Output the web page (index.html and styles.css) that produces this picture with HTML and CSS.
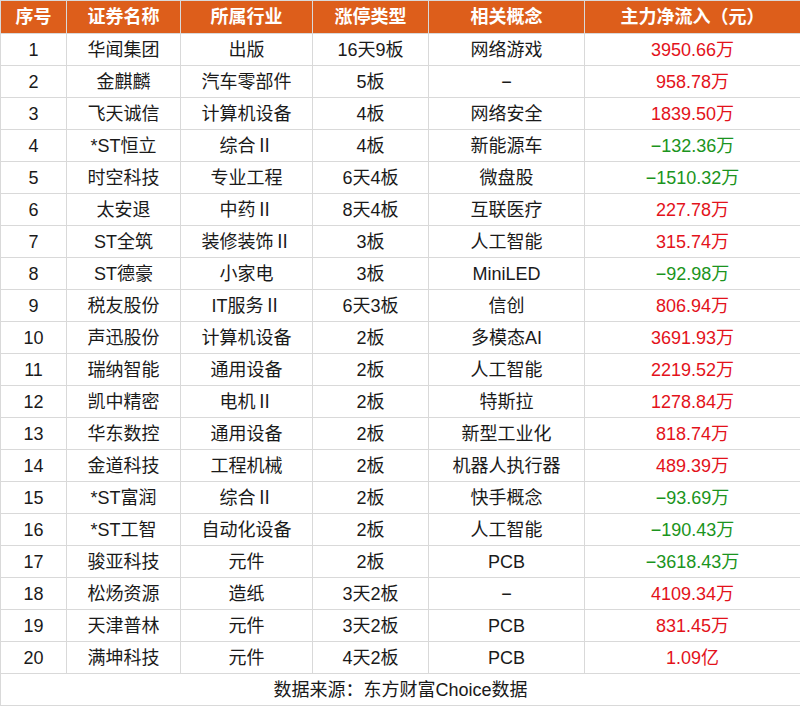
FILE: index.html
```html
<!DOCTYPE html>
<html lang="zh-CN">
<head>
<meta charset="utf-8">
<link rel="stylesheet" href="styles.css">
</head>
<body>
<table class="tbl">
<colgroup>
<col class="c1"><col class="c2"><col class="c3"><col class="c4"><col class="c5"><col class="c6">
</colgroup>
<thead>
<tr><th>序号</th><th>证券名称</th><th>所属行业</th><th>涨停类型</th><th>相关概念</th><th>主力净流入（元）</th></tr>
</thead>
<tbody>
<tr><td>1</td><td>华闻集团</td><td>出版</td><td>16天9板</td><td>网络游戏</td><td class="up">3950.66万</td></tr>
<tr><td>2</td><td>金麒麟</td><td>汽车零部件</td><td>5板</td><td>−</td><td class="up">958.78万</td></tr>
<tr><td>3</td><td>飞天诚信</td><td>计算机设备</td><td>4板</td><td>网络安全</td><td class="up">1839.50万</td></tr>
<tr><td>4</td><td>*ST恒立</td><td>综合Ⅱ</td><td>4板</td><td>新能源车</td><td class="down">−132.36万</td></tr>
<tr><td>5</td><td>时空科技</td><td>专业工程</td><td>6天4板</td><td>微盘股</td><td class="down">−1510.32万</td></tr>
<tr><td>6</td><td>太安退</td><td>中药Ⅱ</td><td>8天4板</td><td>互联医疗</td><td class="up">227.78万</td></tr>
<tr><td>7</td><td>ST全筑</td><td>装修装饰Ⅱ</td><td>3板</td><td>人工智能</td><td class="up">315.74万</td></tr>
<tr><td>8</td><td>ST德豪</td><td>小家电</td><td>3板</td><td>MiniLED</td><td class="down">−92.98万</td></tr>
<tr><td>9</td><td>税友股份</td><td>IT服务Ⅱ</td><td>6天3板</td><td>信创</td><td class="up">806.94万</td></tr>
<tr><td>10</td><td>声迅股份</td><td>计算机设备</td><td>2板</td><td>多模态AI</td><td class="up">3691.93万</td></tr>
<tr><td>11</td><td>瑞纳智能</td><td>通用设备</td><td>2板</td><td>人工智能</td><td class="up">2219.52万</td></tr>
<tr><td>12</td><td>凯中精密</td><td>电机Ⅱ</td><td>2板</td><td>特斯拉</td><td class="up">1278.84万</td></tr>
<tr><td>13</td><td>华东数控</td><td>通用设备</td><td>2板</td><td>新型工业化</td><td class="up">818.74万</td></tr>
<tr><td>14</td><td>金道科技</td><td>工程机械</td><td>2板</td><td>机器人执行器</td><td class="up">489.39万</td></tr>
<tr><td>15</td><td>*ST富润</td><td>综合Ⅱ</td><td>2板</td><td>快手概念</td><td class="down">−93.69万</td></tr>
<tr><td>16</td><td>*ST工智</td><td>自动化设备</td><td>2板</td><td>人工智能</td><td class="down">−190.43万</td></tr>
<tr><td>17</td><td>骏亚科技</td><td>元件</td><td>2板</td><td>PCB</td><td class="down">−3618.43万</td></tr>
<tr><td>18</td><td>松炀资源</td><td>造纸</td><td>3天2板</td><td>−</td><td class="up">4109.34万</td></tr>
<tr><td>19</td><td>天津普林</td><td>元件</td><td>3天2板</td><td>PCB</td><td class="up">831.45万</td></tr>
<tr><td>20</td><td>满坤科技</td><td>元件</td><td>4天2板</td><td>PCB</td><td class="up">1.09亿</td></tr>
</tbody>
<tfoot>
<tr><td colspan="6">数据来源：东方财富Choice数据</td></tr>
</tfoot>
</table>
</body>
</html>
```
FILE: styles.css
```css
html, body {
  margin: 0;
  padding: 0;
  background: #fff;
}
.tbl {
  width: 800px;
  table-layout: fixed;
  border-collapse: collapse;
  font-family: "Liberation Sans", Arial, "Noto Sans CJK SC", sans-serif;
  font-size: 18px;
  color: #1a1a1a;
}
.c1 { width: 66px; }
.c2 { width: 114px; }
.c3 { width: 132px; }
.c4 { width: 116px; }
.c5 { width: 156px; }
.c6 { width: 216px; }
.tbl th, .tbl td {
  border: 1px solid #d9d9d9;
  padding: 0;
  text-align: center;
  white-space: nowrap;
  overflow: hidden;
  line-height: 20px;
}
.tbl th {
  background: #dd5e1b;
  color: #fff;
  font-weight: bold;
  height: 32px;
}
.tbl td {
  height: 31px;
}
.tbl .up { color: #e3121b; }
.tbl .down { color: #1b9420; }
```
